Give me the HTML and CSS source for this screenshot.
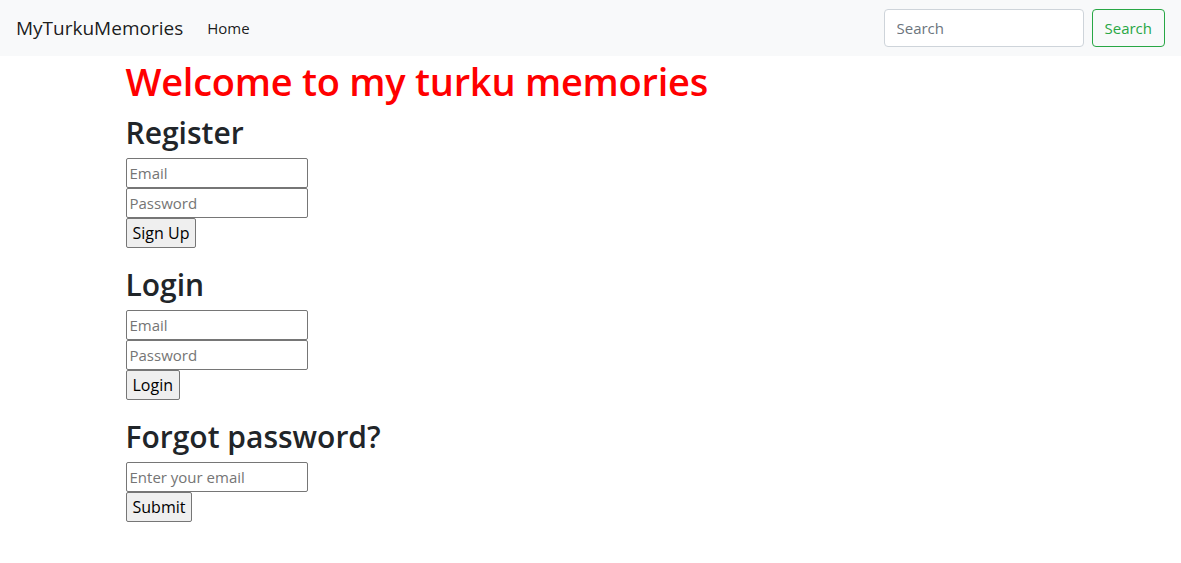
FILE: index.html
```html
<!DOCTYPE html>
<html lang="en">
<head>
<meta charset="utf-8">
<title>MyTurkuMemories</title>
<link rel="stylesheet" href="styles.css">
</head>
<body>
<nav class="navbar">
  <a class="brand" href="#">MyTurkuMemories</a>
  <ul class="nav-links">
    <li><a class="nav-link" href="#">Home</a></li>
  </ul>
  <form class="search-form">
    <input class="search-input" type="search" placeholder="Search">
    <button class="search-btn" type="button">Search</button>
  </form>
</nav>
<main class="container">
  <h1 class="title">Welcome to my turku memories</h1>
  <section class="block">
    <h2>Register</h2>
    <div><input class="field" type="email" placeholder="Email"></div>
    <div><input class="field" type="password" placeholder="Password"></div>
    <div><button class="btn" type="button">Sign Up</button></div>
  </section>
  <section class="block">
    <h2>Login</h2>
    <div><input class="field" type="email" placeholder="Email"></div>
    <div><input class="field" type="password" placeholder="Password"></div>
    <div><button class="btn" type="button">Login</button></div>
  </section>
  <section class="block">
    <h2>Forgot password?</h2>
    <div><input class="field" type="email" placeholder="Enter your email"></div>
    <div><button class="btn" type="button">Submit</button></div>
  </section>
</main>
</body>
</html>
```
FILE: styles.css
```css
* { box-sizing: border-box; }
html, body {
  margin: 0;
  padding: 0;
}
body {
  font-family: "Open Sans", "Noto Sans", sans-serif;
  font-size: 16px;
  line-height: 1.5;
  color: #212529;
  background: #fff;
}
.navbar {
  display: flex;
  align-items: center;
  height: 56px;
  padding: 8px 16px;
  background: #f8f9fa;
}
.brand {
  font-size: 19px;
  color: rgba(0,0,0,.9);
  text-decoration: none;
  margin-right: 16px;
  line-height: 30px;
}
.nav-links {
  list-style: none;
  margin: 0;
  padding: 0;
  display: flex;
  flex: 1;
}
.nav-link {
  display: block;
  padding: 8px;
  font-size: 15px;
  color: rgba(0,0,0,.9);
  text-decoration: none;
}
.search-form {
  display: flex;
  align-items: center;
  gap: 8px;
}
.search-input {
  width: 200px;
  height: 38px;
  padding: 6px 12px;
  font: inherit;
  font-size: 15px;
  color: #495057;
  border: 1px solid #ced4da;
  border-radius: 4px;
  background: #fff;
}
.search-input::placeholder { color: #6c757d; }
.search-btn {
  height: 38px;
  padding: 6px 12px;
  font: inherit;
  font-size: 15px;
  color: #28a745;
  background: transparent;
  border: 1px solid #28a745;
  border-radius: 4px;
}
.container {
  max-width: 960px;
  margin: 0 auto;
  padding: 0 15px;
}
.title {
  margin: 0 0 8px;
  padding-top: 2px;
  font-size: 38px;
  font-weight: 600;
  line-height: 46px;
  color: #ff0000;
  letter-spacing: -0.25px;
}
.block { margin-bottom: 15.5px; }
.block h2 {
  margin: 0 0 8px;
  padding-top: 3px;
  font-size: 30px;
  font-weight: 600;
  line-height: 35.4px;
}
.block div { height: 30px; }
.field {
  width: 182px;
  height: 30px;
  padding: 1px 3px;
  font: inherit;
  font-size: 15px;
  color: #212529;
  border: 1px solid #767676;
  border-radius: 2px;
  background: #fff;
}
.field::placeholder { color: #757575; }
.btn {
  height: 30px;
  padding: 1px 6px;
  font: inherit;
  font-size: 16px;
  color: #000;
  background: #efefef;
  border: 1px solid #767676;
  border-radius: 2px;
}
```
